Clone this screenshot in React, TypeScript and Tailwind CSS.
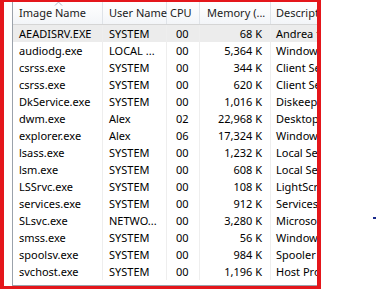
import React from 'react';

const rows: [string, string, string, string, string][] = [
  ['AEADISRV.EXE', 'SYSTEM', '00', '68 K', 'Andrea filters APO'],
  ['audiodg.exe', 'LOCAL ...', '00', '5,364 K', 'Windows Audio'],
  ['csrss.exe', 'SYSTEM', '00', '344 K', 'Client Server'],
  ['csrss.exe', 'SYSTEM', '00', '620 K', 'Client Server'],
  ['DkService.exe', 'SYSTEM', '00', '1,016 K', 'Diskeeper'],
  ['dwm.exe', 'Alex', '02', '22,968 K', 'Desktop Window'],
  ['explorer.exe', 'Alex', '06', '17,324 K', 'Windows Explorer'],
  ['lsass.exe', 'SYSTEM', '00', '1,232 K', 'Local Security'],
  ['lsm.exe', 'SYSTEM', '00', '608 K', 'Local Session'],
  ['LSSrvc.exe', 'SYSTEM', '00', '108 K', 'LightScribe'],
  ['services.exe', 'SYSTEM', '00', '912 K', 'Services and'],
  ['SLsvc.exe', 'NETWO...', '00', '3,280 K', 'Microsoft'],
  ['smss.exe', 'SYSTEM', '00', '56 K', 'Windows Session'],
  ['spoolsv.exe', 'SYSTEM', '00', '984 K', 'Spooler Sub'],
  ['svchost.exe', 'SYSTEM', '00', '1,196 K', 'Host Process'],
];

const App: React.FC = () => {
  return (
    <div className="relative w-[376px] h-[289px] bg-white overflow-hidden font-['Noto_Sans',sans-serif] text-[11px] text-black">
      {/* red frame drawn over the task list */}
      <div className="w-[321px] h-[289px] border-l-4 border-t-2 border-r-4 border-b-[3px] border-[#e4161b] overflow-hidden pl-2">
        <div className="w-[400px] h-[284px] border-l border-b border-[#9ba2ab] bg-white">
          {/* header */}
          <div className="relative flex h-[23px] border-b border-[#d5d5d5] bg-gradient-to-b from-white to-[#f3f5f8] text-[#1b1b1b] whitespace-nowrap">
            <div className="w-[90px] border-r border-[#dfe3e8] pl-[6px] flex items-center">Image Name</div>
            <div className="w-[64px] border-r border-[#dfe3e8] pl-[6px] flex items-center">User Name</div>
            <div className="w-[33px] border-r border-[#dfe3e8] pl-[3px] flex items-center">CPU</div>
            <div className="w-[71px] border-r border-[#dfe3e8] pl-[7px] flex items-center">Memory (...</div>
            <div className="flex-1 pl-[5px] flex items-center">Description</div>
            <svg className="absolute left-[41px] top-[-1px]" width="9" height="5" viewBox="0 0 9 5">
              <path d="M1 4.5 L4.5 1 L8 4.5" fill="none" stroke="#a9b4c2" strokeWidth="1" />
            </svg>
          </div>
          {/* rows */}
          {rows.map((r, i) => (
            <div key={i} className={`flex h-[17px] leading-[17px] whitespace-nowrap ${i === 0 ? 'bg-[#ececec]' : ''}`}>
              <div className="w-[90px] border-r border-[#eeeeee] pl-[6px] overflow-hidden">{r[0]}</div>
              <div className="w-[64px] border-r border-[#eeeeee] pl-[6px] overflow-hidden">{r[1]}</div>
              <div className="w-[33px] border-r border-[#eeeeee] pl-[9px]">{r[2]}</div>
              <div className="w-[71px] border-r border-[#eeeeee] pr-[8px] text-right">{r[3]}</div>
              <div className="flex-1 pl-[5px]">{r[4]}</div>
            </div>
          ))}
        </div>
      </div>
      <div className="absolute left-[373px] top-[217px] w-[3px] h-[2px] bg-[#1a2a8c]" />
    </div>
  );
};

export default App;
